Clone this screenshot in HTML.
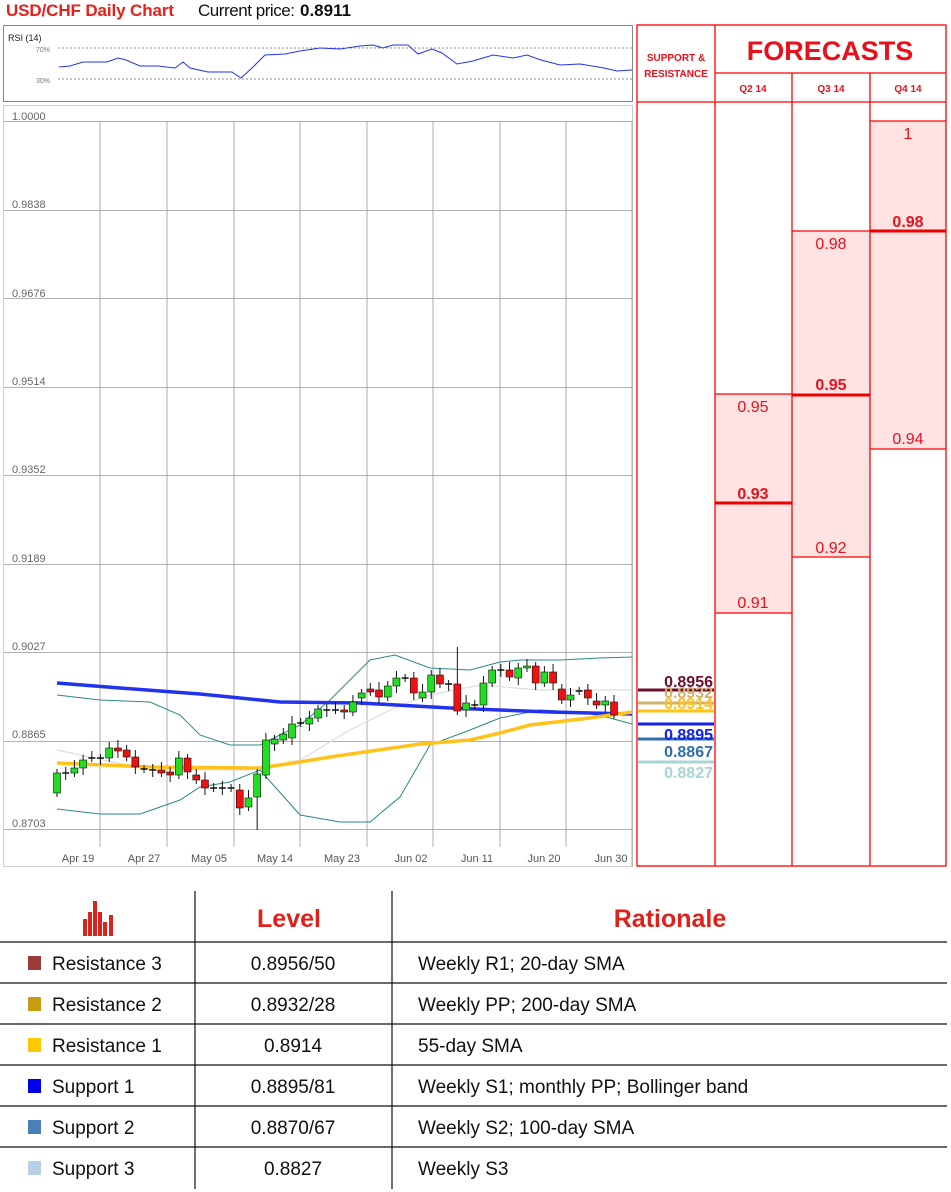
<!DOCTYPE html>
<html><head><meta charset="utf-8"><style>
body{margin:0;width:951px;height:1192px;background:#fff;overflow:hidden;font-family:"Liberation Sans",sans-serif}
svg{position:absolute;left:0;top:0}
</style></head><body>
<svg width="951" height="1192" viewBox="0 0 951 1192" xmlns="http://www.w3.org/2000/svg" font-family="Liberation Sans, sans-serif">
<!-- title -->
<text x="6" y="16" font-size="17" font-weight="bold" fill="#e8201c" textLength="168">USD/CHF Daily Chart</text>
<text x="198" y="16" font-size="17" fill="#111" textLength="97">Current price:</text>
<text x="300" y="16" font-size="17" font-weight="bold" fill="#111">0.8911</text>
<!-- RSI box -->
<rect x="3.5" y="25.5" width="629" height="76" fill="#fff" stroke="#888"/>
<text x="8" y="41" font-size="9" fill="#222">RSI (14)</text>
<text x="36" y="52" font-size="7" fill="#777">70%</text>
<text x="36" y="83" font-size="7" fill="#777">30%</text>
<line x1="58" y1="48" x2="632" y2="48" stroke="#666" stroke-dasharray="2,2" stroke-width="0.7"/>
<line x1="58" y1="79" x2="632" y2="79" stroke="#666" stroke-dasharray="2,2" stroke-width="0.7"/>
<polyline fill="none" stroke="#2233ee" stroke-width="1" points="59,67 70,66 83,62 107,62 118,58 126,60 140,66 158,66 175,68 183,62 190,68 208,72 232,72 241,78 252,68 265,55 285,54 300,51 320,48 340,49 360,46 373,45 383,48 393,45 408,45 418,54 432,49 442,53 457,64 473,61 493,55 513,58 527,55 541,60 560,65 580,64 604,68 617,71 632,70"/>
<!-- chart -->
<rect x="3.5" y="105.5" width="629" height="761" fill="#fff" stroke="#ccc"/>
<g stroke="#999" stroke-width="0.8">
<line x1="4" y1="121.5" x2="632" y2="121.5"/>
<line x1="4" y1="210.5" x2="632" y2="210.5"/>
<line x1="4" y1="298.5" x2="632" y2="298.5"/>
<line x1="4" y1="387.5" x2="632" y2="387.5"/>
<line x1="4" y1="475.5" x2="632" y2="475.5"/>
<line x1="4" y1="564.5" x2="632" y2="564.5"/>
<line x1="4" y1="652.5" x2="632" y2="652.5"/>
<line x1="4" y1="741.5" x2="632" y2="741.5"/>
<line x1="4" y1="829.5" x2="632" y2="829.5"/>
<line x1="100" y1="121" x2="100" y2="847"/><line x1="167" y1="121" x2="167" y2="847"/>
<line x1="234" y1="121" x2="234" y2="847"/><line x1="300" y1="121" x2="300" y2="847"/>
<line x1="367" y1="121" x2="367" y2="847"/><line x1="433" y1="121" x2="433" y2="847"/>
<line x1="500" y1="121" x2="500" y2="847"/><line x1="566" y1="121" x2="566" y2="847"/>
<line x1="632" y1="121" x2="632" y2="866"/>
</g>
<g font-size="11" fill="#666">
<text x="12" y="120">1.0000</text><text x="12" y="208">0.9838</text><text x="12" y="297">0.9676</text>
<text x="12" y="385">0.9514</text><text x="12" y="473">0.9352</text><text x="12" y="562">0.9189</text>
<text x="12" y="650">0.9027</text><text x="12" y="738">0.8865</text><text x="12" y="827">0.8703</text>
</g>
<g font-size="11" fill="#555" text-anchor="middle">
<text x="78" y="862">Apr 19</text><text x="144" y="862">Apr 27</text><text x="209" y="862">May 05</text>
<text x="275" y="862">May 14</text><text x="342" y="862">May 23</text><text x="411" y="862">Jun 02</text>
<text x="477" y="862">Jun 11</text><text x="544" y="862">Jun 20</text><text x="611" y="862">Jun 30</text>
</g>
<!-- bollinger -->
<polyline fill="none" stroke="#ddd" stroke-width="1.2" points="57,750 150,770 250,770 300,760 350,730 400,705 430,695 480,685 540,690 632,690"/>
<polyline fill="none" stroke="#2a8a86" stroke-width="1" points="57,695 100,700 150,702 180,715 200,735 230,745 260,745 300,725 330,700 370,660 395,655 430,668 470,670 500,662 520,660 560,660 600,658 632,657"/>
<polyline fill="none" stroke="#2a8a86" stroke-width="1" points="57,809 100,814 140,814 180,800 200,787 230,782 260,770 300,815 340,822 370,822 400,797 430,745 470,730 500,718 540,710 580,712 610,718 632,724"/>
<polyline fill="none" stroke="#2233ee" stroke-width="3.5" points="57,683 120,688 200,694 280,702 360,703 450,708 550,712 632,714"/>
<polyline fill="none" stroke="#ffc21a" stroke-width="3.5" points="57,763 150,767 260,768 300,762 330,757 420,744 470,740 500,733 530,725 590,718 632,712"/>
<g id="c"></g>
<!-- forecasts -->
<g fill="#ffe3e3">
<rect x="715" y="394" width="77" height="219"/>
<rect x="792" y="231" width="78" height="326"/>
<rect x="870" y="121" width="76" height="328"/>
</g>
<g stroke="#f00" stroke-width="1.3" fill="none">
<rect x="637" y="25" width="309" height="841"/>
<line x1="715" y1="25" x2="715" y2="866"/><line x1="792" y1="73" x2="792" y2="866"/><line x1="870" y1="73" x2="870" y2="866"/>
<line x1="715" y1="73" x2="946" y2="73"/><line x1="637" y1="102" x2="946" y2="102"/>
<line x1="715" y1="394" x2="792" y2="394"/><line x1="715" y1="613" x2="792" y2="613"/>
<line x1="792" y1="231" x2="870" y2="231"/><line x1="792" y1="557" x2="870" y2="557"/>
<line x1="870" y1="121" x2="946" y2="121"/><line x1="870" y1="449" x2="946" y2="449"/>
</g>
<g stroke="#e00" stroke-width="3">
<line x1="715" y1="503" x2="792" y2="503"/><line x1="792" y1="395" x2="870" y2="395"/><line x1="870" y1="231" x2="946" y2="231"/>
</g>
<g fill="#e8101a" text-anchor="middle">
<text x="830" y="60" font-size="27" font-weight="bold">FORECASTS</text>
<text x="676" y="61" font-size="10" font-weight="bold">SUPPORT &amp;</text>
<text x="676" y="77" font-size="10" font-weight="bold">RESISTANCE</text>
<text x="753" y="92" font-size="10" font-weight="bold">Q2 14</text>
<text x="831" y="92" font-size="10" font-weight="bold">Q3 14</text>
<text x="908" y="92" font-size="10" font-weight="bold">Q4 14</text>
<g font-size="16">
<text x="908" y="139">1</text><text x="908" y="227" font-weight="bold">0.98</text><text x="908" y="444">0.94</text>
<text x="831" y="249">0.98</text><text x="831" y="390" font-weight="bold">0.95</text><text x="831" y="553">0.92</text>
<text x="753" y="412">0.95</text><text x="753" y="499" font-weight="bold">0.93</text><text x="753" y="608">0.91</text>
</g></g>
<!-- S&R levels -->
<g stroke-width="3">
<line x1="638" y1="690" x2="714" y2="690" stroke="#6b1030"/>
<line x1="638" y1="703" x2="714" y2="703" stroke="#d4b070"/>
<line x1="638" y1="711" x2="714" y2="711" stroke="#ffc21a"/>
<line x1="638" y1="724" x2="714" y2="724" stroke="#1020ee"/>
<line x1="638" y1="739" x2="714" y2="739" stroke="#2f70a8"/>
<line x1="638" y1="762" x2="714" y2="762" stroke="#a8d4d4"/>
</g>
<g font-size="16" font-weight="bold" text-anchor="end">
<text x="713" y="687" fill="#6b1030">0.8956</text>
<text x="713" y="698" fill="#d4b070">0.8932</text>
<text x="713" y="709" fill="#ffc21a">0.8914</text>
<text x="713" y="740" fill="#1020ee">0.8895</text>
<text x="713" y="757" fill="#2f70a8">0.8867</text>
<text x="713" y="778" fill="#a8d4d4">0.8827</text>
</g>
<!-- table -->
<g fill="#d8251c"><rect x="83" y="919" width="4" height="17"/><rect x="88" y="912" width="4" height="24"/><rect x="93" y="901" width="4" height="35"/><rect x="98" y="912" width="4" height="24"/><rect x="103" y="922" width="4" height="14"/><rect x="109" y="915" width="4" height="21"/></g>
<text x="289" y="927" font-size="25" font-weight="bold" fill="#e0201a" text-anchor="middle">Level</text>
<text x="670" y="927" font-size="25" font-weight="bold" fill="#e0201a" text-anchor="middle">Rationale</text>
<g stroke="#111" stroke-width="1.2">
<line x1="195" y1="891" x2="195" y2="1189"/><line x1="392" y1="891" x2="392" y2="1189"/>
<line x1="0" y1="942" x2="947" y2="942"/><line x1="0" y1="983" x2="947" y2="983"/><line x1="0" y1="1024" x2="947" y2="1024"/>
<line x1="0" y1="1065" x2="947" y2="1065"/><line x1="0" y1="1106" x2="947" y2="1106"/><line x1="0" y1="1147" x2="947" y2="1147"/>
</g>
<g font-size="19" fill="#111">
<rect x="28" y="956" width="13" height="14" fill="#9b3b3b"/><text x="52" y="970">Resistance 3</text><text x="293" y="970" text-anchor="middle">0.8956/50</text><text x="418" y="970">Weekly R1; 20-day SMA</text>
<rect x="28" y="997" width="13" height="14" fill="#c89b14"/><text x="52" y="1011">Resistance 2</text><text x="293" y="1011" text-anchor="middle">0.8932/28</text><text x="418" y="1011">Weekly PP; 200-day SMA</text>
<rect x="28" y="1038" width="13" height="14" fill="#ffc800"/><text x="52" y="1052">Resistance 1</text><text x="293" y="1052" text-anchor="middle">0.8914</text><text x="418" y="1052">55-day SMA</text>
<rect x="28" y="1079" width="13" height="14" fill="#0000ee"/><text x="52" y="1093">Support 1</text><text x="293" y="1093" text-anchor="middle">0.8895/81</text><text x="418" y="1093">Weekly S1; monthly PP; Bollinger band</text>
<rect x="28" y="1120" width="13" height="14" fill="#4a7fba"/><text x="52" y="1134">Support 2</text><text x="293" y="1134" text-anchor="middle">0.8870/67</text><text x="418" y="1134">Weekly S2; 100-day SMA</text>
<rect x="28" y="1161" width="13" height="14" fill="#b8cfe8"/><text x="52" y="1175">Support 3</text><text x="293" y="1175" text-anchor="middle">0.8827</text><text x="418" y="1175">Weekly S3</text>
</g>
</svg>
<script>
var d=[[793,773],[773,773],[773,768],[768,760],[758,758],[758,758],[758,748],[748,751],[750,757],[757,767],[769,769],[770,770],[770,773],[772,775],[775,758],[758,772],[775,780],[780,788],[788,788],[788,788],[788,788],[790,808],[807,798],[797,774],[775,740],[744,739],[740,734],[738,724],[723,723],[724,718],[718,709],[710,710],[710,710],[710,712],[712,702],[698,693],[689,692],[690,697],[697,686],[686,678],[678,678],[678,693],[698,692],[692,675],[675,684],[684,684],[684,711],[710,703],[705,705],[705,683],[683,670],[670,670],[670,677],[678,668],[668,666],[666,683],[683,672],[672,683],[689,700],[700,695],[691,691],[690,698],[701,705],[705,701],[702,715]];
var s='',n=d.length;
for(var i=0;i<n;i++){var x=57+i*(557/(n-1)),o=d[i][0],c=d[i][1],t=Math.min(o,c),b=Math.max(o,c);
var hi=t-4-(i*7%5),lo=b+4+(i*3%6);if(i==46)hi=647;if(i==23)lo=830;
s+='<line x1="'+x+'" y1="'+hi+'" x2="'+x+'" y2="'+lo+'" stroke="#111" stroke-width="1"/>';
if(b-t<1)s+='<line x1="'+(x-3.5)+'" y1="'+t+'" x2="'+(x+3.5)+'" y2="'+t+'" stroke="#111" stroke-width="1.5"/>';
else s+='<rect x="'+(x-3.5)+'" y="'+t+'" width="7" height="'+(b-t)+'" fill="'+(c<o?'#22dd22':'#ee1111')+'" stroke="#111" stroke-width="0.6"/>';}
document.getElementById('c').innerHTML=s;
</script>
</body></html>
